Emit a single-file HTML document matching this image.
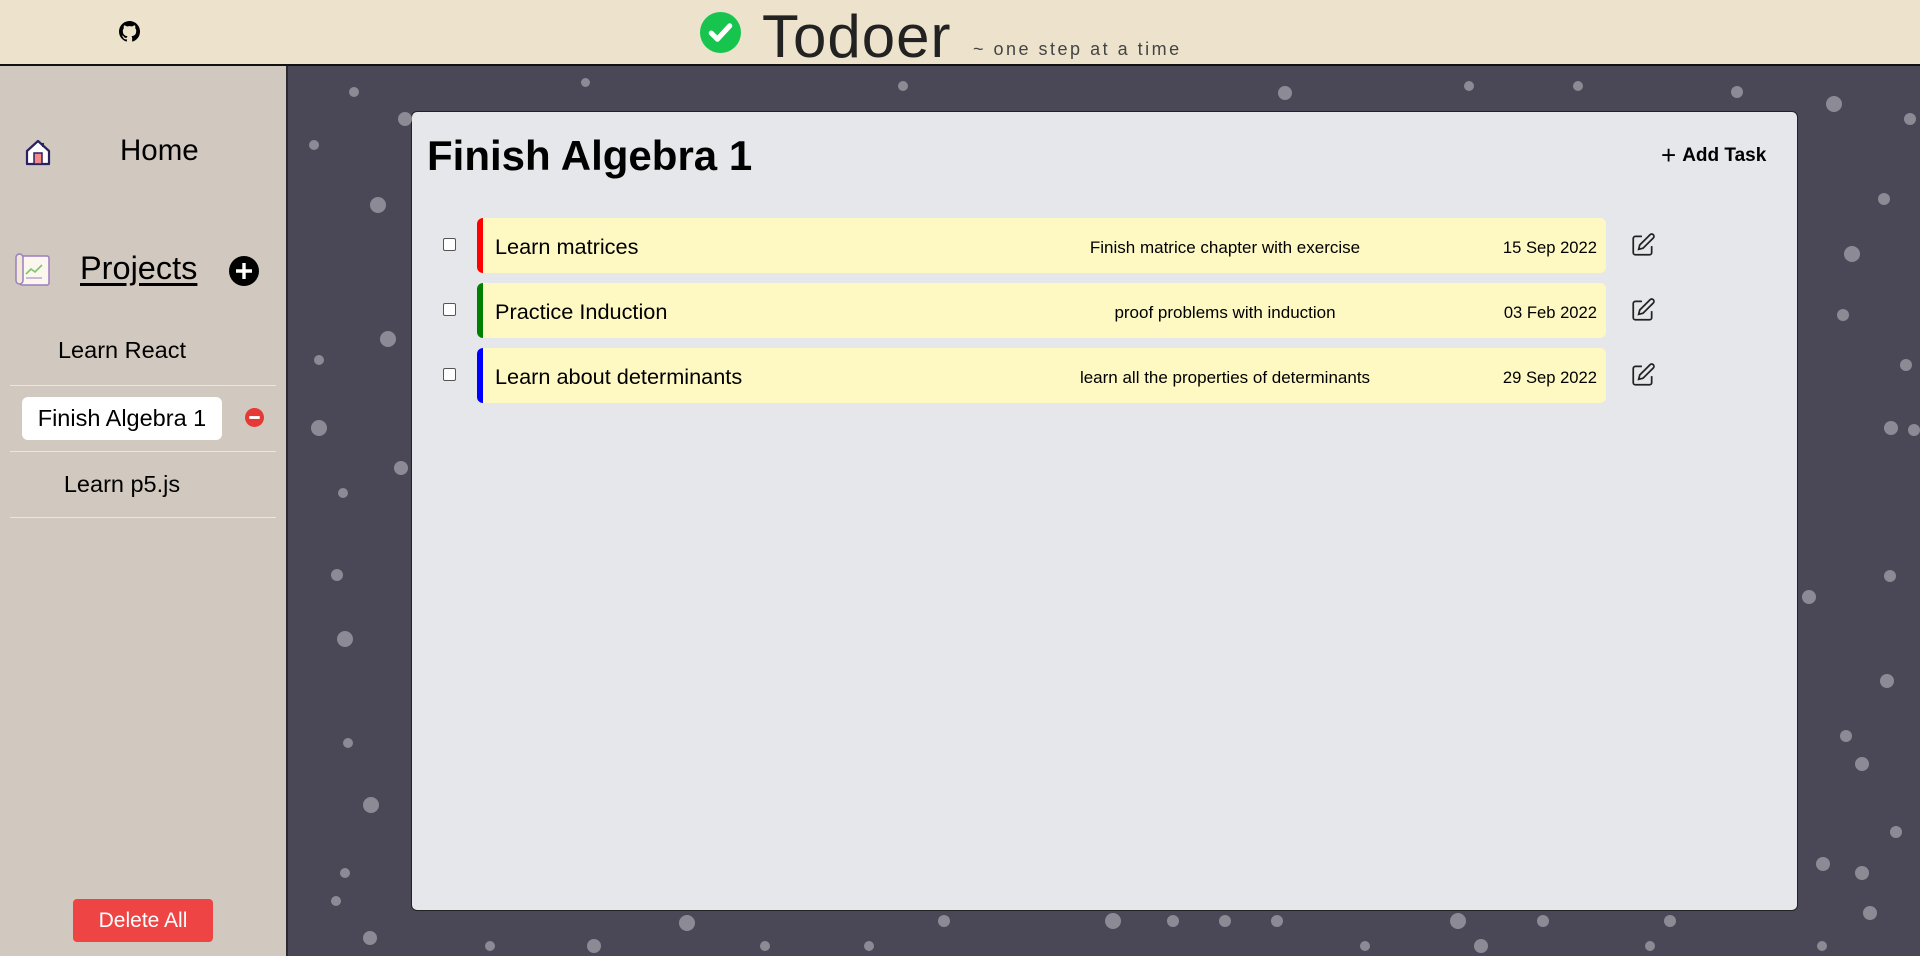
<!DOCTYPE html>
<html><head><meta charset="utf-8"><style>
*{box-sizing:border-box;margin:0;padding:0}
body{width:1920px;height:956px;overflow:hidden;font-family:"Liberation Sans",sans-serif;background:#4a4857;position:relative}
.hdr{position:absolute;left:0;top:0;width:1920px;height:66px;background:#ede3cc;border-bottom:2px solid #111}
.side{position:absolute;left:0;top:66px;width:288px;height:890px;background:#d1c9bf;border-right:2px solid #2a2a30}
.dot{position:absolute;border-radius:50%;background:#8c8a95}
.card{position:absolute;left:411px;top:111px;width:1387px;height:800px;background:#e6e7ea;border:1px solid #222;border-radius:6px}
.row{position:absolute;left:65px;width:1129px;height:55px;background:#fef8c3;border-radius:6px;border-left:6px solid red;font-size:17px}
.row .n{position:absolute;left:12px;top:16px;font-size:21.7px}
.row .d{position:absolute;left:542px;width:400px;text-align:center;top:20px}
.row .dt{position:absolute;right:9px;top:20px;font-size:16.6px}
.cb{position:absolute;left:31px;width:13px;height:13px;border:1px solid #555;border-radius:2px;background:#fff}
.ed{position:absolute;left:1218px}
.sl{position:absolute;left:0;width:244px;text-align:center;font-size:23.5px;color:#000}
.hr{position:absolute;left:10px;width:266px;height:1px;background:#e8e6e2}
</style></head><body>
<div class="hdr">
<svg style="position:absolute;left:119px;top:21px" width="21" height="21" viewBox="0 0 16 16"><path fill="#000" d="M8 0C3.58 0 0 3.58 0 8c0 3.54 2.290 6.53 5.47 7.59.4.07.55-.17.55-.38v-1.33c-2.23.48-2.7-1.07-2.7-1.07-.36-.92-.89-1.170-.89-1.170-.73-.5.06-.49.06-.49.8.06 1.23.83 1.23.83.71 1.22 1.87.87 2.33.66.07-.52.28-.87.51-1.07-1.78-.2-3.64-.89-3.64-3.95 0-.87.31-1.59.82-2.15-.08-.2-.36-1.02.08-2.12 0 0 .67-.21 2.2.82.64-.18 1.32-.27 2-.27s1.36.09 2 .27c1.53-1.04 2.2-.82 2.2-.82.44 1.1.16 1.92.08 2.12.51.56.82 1.27.82 2.15 0 3.07-1.87 3.75-3.65 3.95.29.25.54.73.54 1.48v2.2c0 .21.15.46.55.38A8.01 8.01 0 0016 8c0-4.42-3.58-8-8-8z"/></svg>
<svg style="position:absolute;left:700px;top:12px" width="41" height="41" viewBox="0 0 40 40"><circle cx="20" cy="20" r="20" fill="#16c44e"/><path d="M11 20.5l6 6 12-13" stroke="#fff" stroke-width="5" fill="none" stroke-linecap="round" stroke-linejoin="round"/></svg>
<div style="position:absolute;left:762px;top:2px;font-size:60px;font-weight:300;color:#222;letter-spacing:1px">Todoer</div>
<div style="position:absolute;left:973px;top:39px;font-size:18px;color:#444;letter-spacing:2.5px">~ one step at a time</div>
</div>
<div class="side">
<svg style="position:absolute;left:24px;top:72px" width="28" height="28" viewBox="0 0 28 28"><path d="M3 13L14 3l11 10v13H3z" fill="#fff" stroke="#2a2160" stroke-width="2.2" stroke-linejoin="round"/><rect x="10" y="15" width="8" height="11" fill="#f28a8a" stroke="#2a2160" stroke-width="1.5"/><path d="M19 5v4" stroke="#2a2160" stroke-width="2"/></svg>
<div style="position:absolute;left:120px;top:68px;font-size:29.5px">Home</div>
<svg style="position:absolute;left:15px;top:186px" width="36" height="36" viewBox="0 0 36 36"><rect x="5" y="4" width="29" height="29" rx="2" fill="#fbf6ee" stroke="#9b7fbf" stroke-width="1.5"/><rect x="1" y="2" width="7" height="30" rx="3.5" fill="#f2e8d6" stroke="#9b7fbf" stroke-width="1.5"/><path d="M11 22l5-5 4 3 7-7" stroke="#7cc66a" stroke-width="1.6" fill="none"/><path d="M11 26h16" stroke="#9b7fbf"/></svg>
<div style="position:absolute;left:80px;top:184px;font-size:32.5px;text-decoration:underline;text-underline-offset:4px">Projects</div>
<svg style="position:absolute;left:229px;top:190px" width="30" height="30" viewBox="0 0 30 30"><circle cx="15" cy="15" r="15" fill="#000"/><path d="M15 7v16M7 15h16" stroke="#fff" stroke-width="3.4"/></svg>
<div class="sl" style="top:271px">Learn React</div>
<div class="hr" style="top:319px"></div>
<div style="position:absolute;left:22px;top:331px;width:200px;height:43px;background:#fff;border-radius:6px;text-align:center;font-size:23.5px;line-height:43px">Finish Algebra 1</div>
<svg style="position:absolute;left:245px;top:342px" width="19" height="19" viewBox="0 0 20 20"><circle cx="10" cy="10" r="10" fill="#e53935"/><rect x="4.5" y="8.5" width="11" height="3" fill="#fff"/></svg>
<div class="hr" style="top:385px"></div>
<div class="sl" style="top:405px">Learn p5.js</div>
<div class="hr" style="top:451px"></div>
<div style="position:absolute;left:73px;top:833px;width:140px;height:43px;background:#ef4444;color:#fff;border-radius:4px;text-align:center;line-height:43px;font-size:21px">Delete All</div>
</div>
<div class="card">
<div style="position:absolute;left:15px;top:20px;font-size:42px;font-weight:bold">Finish Algebra 1</div>
<div style="position:absolute;left:1249px;top:28px;font-size:19px;font-weight:bold"><span style="font-weight:300;font-size:26px;vertical-align:-3px;margin-right:6px">+</span>Add Task</div>
<div class="cb" style="top:126px"></div>
<div class="row" style="top:106px;border-left-color:#f00"><span class="n">Learn matrices</span><span class="d">Finish matrice chapter with exercise</span><span class="dt">15 Sep 2022</span></div>
<div class="cb" style="top:191px"></div>
<div class="row" style="top:171px;border-left-color:#008000"><span class="n">Practice Induction</span><span class="d">proof problems with induction</span><span class="dt">03 Feb 2022</span></div>
<div class="cb" style="top:256px"></div>
<div class="row" style="top:236px;border-left-color:#00f"><span class="n">Learn about determinants</span><span class="d">learn all the properties of determinants</span><span class="dt">29 Sep 2022</span></div>
<svg class="ed" style="top:120px" width="26" height="26" viewBox="0 0 24 24" fill="none" stroke="#222" stroke-width="1.6"><path d="M11 4H5a2 2 0 0 0-2 2v13a2 2 0 0 0 2 2h13a2 2 0 0 0 2-2v-6"/><path d="M18.5 2.5a2.1 2.1 0 0 1 3 3L12 15l-4 1 1-4z"/></svg>
<svg class="ed" style="top:185px" width="26" height="26" viewBox="0 0 24 24" fill="none" stroke="#222" stroke-width="1.6"><path d="M11 4H5a2 2 0 0 0-2 2v13a2 2 0 0 0 2 2h13a2 2 0 0 0 2-2v-6"/><path d="M18.5 2.5a2.1 2.1 0 0 1 3 3L12 15l-4 1 1-4z"/></svg>
<svg class="ed" style="top:250px" width="26" height="26" viewBox="0 0 24 24" fill="none" stroke="#222" stroke-width="1.6"><path d="M11 4H5a2 2 0 0 0-2 2v13a2 2 0 0 0 2 2h13a2 2 0 0 0 2-2v-6"/><path d="M18.5 2.5a2.1 2.1 0 0 1 3 3L12 15l-4 1 1-4z"/></svg>
</div>
<div class="dot" style="left:349px;top:87px;width:10px;height:10px"></div>
<div class="dot" style="left:398px;top:112px;width:14px;height:14px"></div>
<div class="dot" style="left:309px;top:140px;width:10px;height:10px"></div>
<div class="dot" style="left:581px;top:78px;width:9px;height:9px"></div>
<div class="dot" style="left:898px;top:81px;width:10px;height:10px"></div>
<div class="dot" style="left:1278px;top:86px;width:14px;height:14px"></div>
<div class="dot" style="left:1464px;top:81px;width:10px;height:10px"></div>
<div class="dot" style="left:1573px;top:81px;width:10px;height:10px"></div>
<div class="dot" style="left:1731px;top:86px;width:12px;height:12px"></div>
<div class="dot" style="left:1826px;top:96px;width:16px;height:16px"></div>
<div class="dot" style="left:1904px;top:113px;width:12px;height:12px"></div>
<div class="dot" style="left:370px;top:197px;width:16px;height:16px"></div>
<div class="dot" style="left:1878px;top:193px;width:12px;height:12px"></div>
<div class="dot" style="left:1844px;top:246px;width:16px;height:16px"></div>
<div class="dot" style="left:1837px;top:309px;width:12px;height:12px"></div>
<div class="dot" style="left:1900px;top:359px;width:12px;height:12px"></div>
<div class="dot" style="left:380px;top:331px;width:16px;height:16px"></div>
<div class="dot" style="left:314px;top:355px;width:10px;height:10px"></div>
<div class="dot" style="left:311px;top:420px;width:16px;height:16px"></div>
<div class="dot" style="left:338px;top:488px;width:10px;height:10px"></div>
<div class="dot" style="left:394px;top:461px;width:14px;height:14px"></div>
<div class="dot" style="left:1884px;top:421px;width:14px;height:14px"></div>
<div class="dot" style="left:1884px;top:570px;width:12px;height:12px"></div>
<div class="dot" style="left:1802px;top:590px;width:14px;height:14px"></div>
<div class="dot" style="left:331px;top:569px;width:12px;height:12px"></div>
<div class="dot" style="left:337px;top:631px;width:16px;height:16px"></div>
<div class="dot" style="left:1880px;top:674px;width:14px;height:14px"></div>
<div class="dot" style="left:1840px;top:730px;width:12px;height:12px"></div>
<div class="dot" style="left:343px;top:738px;width:10px;height:10px"></div>
<div class="dot" style="left:1855px;top:757px;width:14px;height:14px"></div>
<div class="dot" style="left:363px;top:797px;width:16px;height:16px"></div>
<div class="dot" style="left:1890px;top:826px;width:12px;height:12px"></div>
<div class="dot" style="left:1816px;top:857px;width:14px;height:14px"></div>
<div class="dot" style="left:340px;top:868px;width:10px;height:10px"></div>
<div class="dot" style="left:1855px;top:866px;width:14px;height:14px"></div>
<div class="dot" style="left:331px;top:896px;width:10px;height:10px"></div>
<div class="dot" style="left:1863px;top:906px;width:14px;height:14px"></div>
<div class="dot" style="left:363px;top:931px;width:14px;height:14px"></div>
<div class="dot" style="left:485px;top:941px;width:10px;height:10px"></div>
<div class="dot" style="left:587px;top:939px;width:14px;height:14px"></div>
<div class="dot" style="left:679px;top:915px;width:16px;height:16px"></div>
<div class="dot" style="left:760px;top:941px;width:10px;height:10px"></div>
<div class="dot" style="left:864px;top:941px;width:10px;height:10px"></div>
<div class="dot" style="left:938px;top:915px;width:12px;height:12px"></div>
<div class="dot" style="left:1105px;top:913px;width:16px;height:16px"></div>
<div class="dot" style="left:1167px;top:915px;width:12px;height:12px"></div>
<div class="dot" style="left:1219px;top:915px;width:12px;height:12px"></div>
<div class="dot" style="left:1271px;top:915px;width:12px;height:12px"></div>
<div class="dot" style="left:1360px;top:941px;width:10px;height:10px"></div>
<div class="dot" style="left:1450px;top:913px;width:16px;height:16px"></div>
<div class="dot" style="left:1474px;top:939px;width:14px;height:14px"></div>
<div class="dot" style="left:1537px;top:915px;width:12px;height:12px"></div>
<div class="dot" style="left:1645px;top:941px;width:10px;height:10px"></div>
<div class="dot" style="left:1664px;top:915px;width:12px;height:12px"></div>
<div class="dot" style="left:1817px;top:941px;width:10px;height:10px"></div>
<div class="dot" style="left:1908px;top:424px;width:12px;height:12px"></div>
</body></html>
